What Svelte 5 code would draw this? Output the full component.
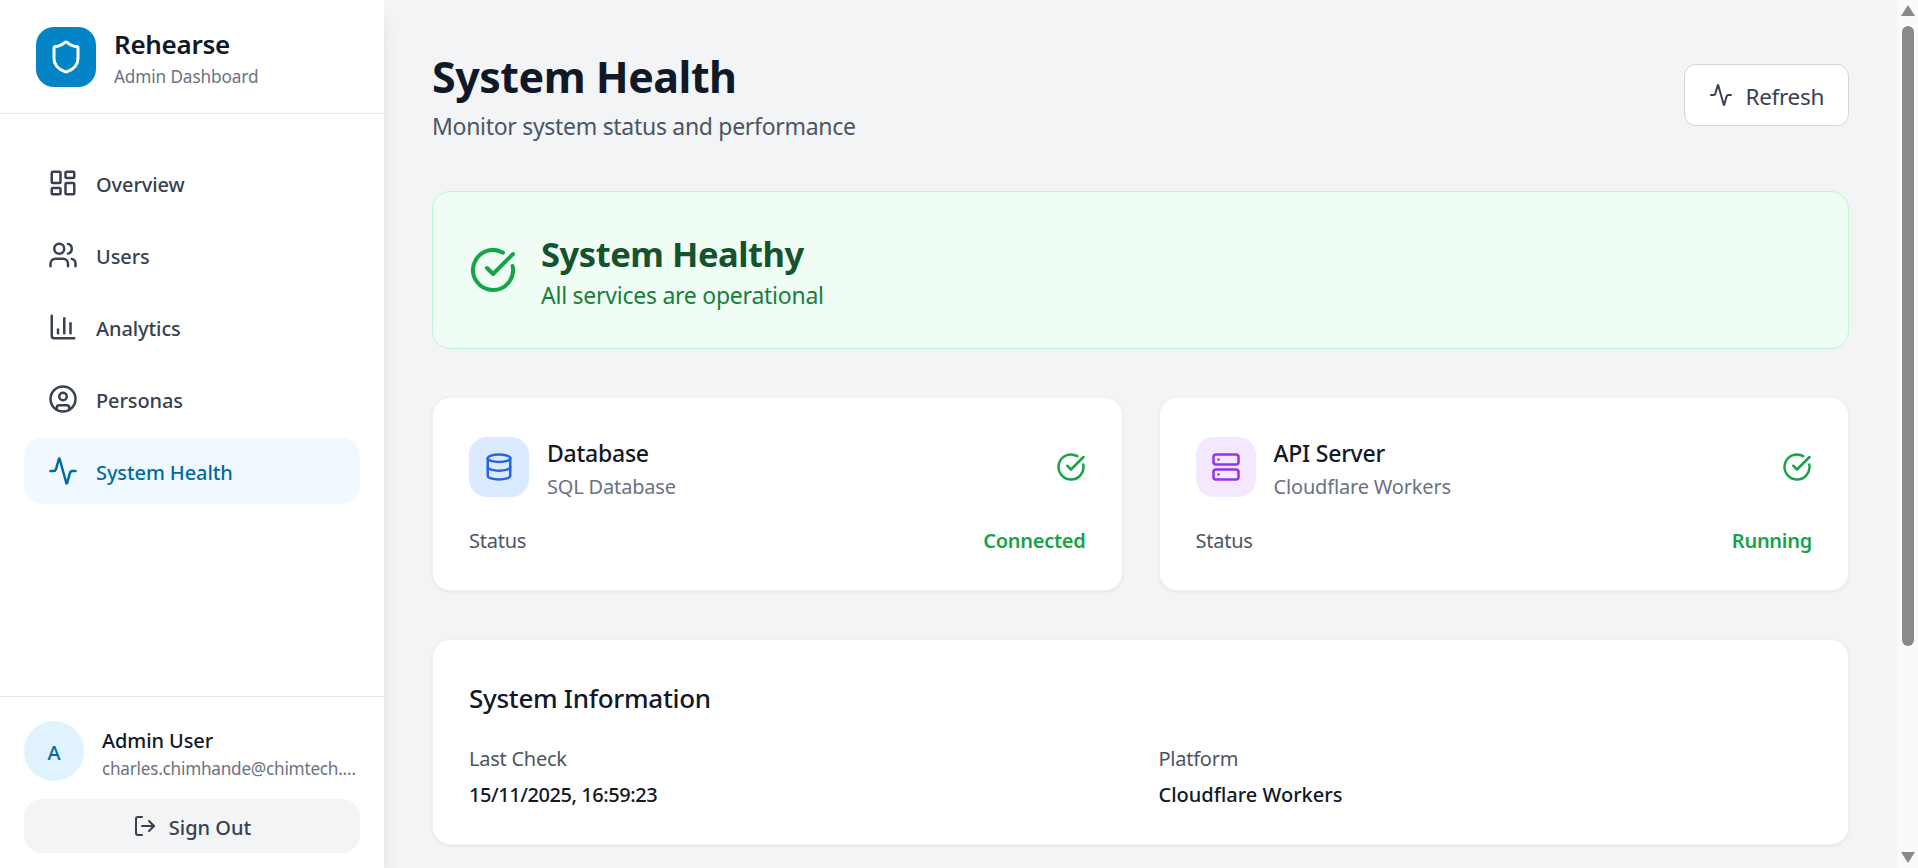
<script>
  const nav = [
    { label: 'Overview', icon: 'grid' },
    { label: 'Users', icon: 'users' },
    { label: 'Analytics', icon: 'chart' },
    { label: 'Personas', icon: 'persona' },
    { label: 'System Health', icon: 'activity', active: true }
  ];
  const services = [
    { name: 'Database', sub: 'SQL Database', tone: 'blue', icon: 'db', state: 'Connected' },
    { name: 'API Server', sub: 'Cloudflare Workers', tone: 'purple', icon: 'server', state: 'Running' }
  ];
  const activity = 'M22 12h-2.48a2 2 0 0 0-1.93 1.46l-2.35 8.36a.25.25 0 0 1-.48 0L9.24 2.18a.25.25 0 0 0-.48 0l-2.35 8.36A2 2 0 0 1 4.49 12H2';
</script>

{#snippet check(size)}
  <svg class="ic" width={size} height={size} viewBox="0 0 24 24"><path d="M21.801 10A10 10 0 1 1 17 3.335" /><path d="m9 11 3 3L22 4" /></svg>
{/snippet}

{#snippet navIcon(name)}
  <svg class="ic" width="30" height="30" viewBox="0 0 24 24">
    {#if name === 'grid'}
      <rect x="3" y="3" width="7" height="9" rx="1" /><rect x="14" y="3" width="7" height="5" rx="1" /><rect x="14" y="12" width="7" height="9" rx="1" /><rect x="3" y="16" width="7" height="5" rx="1" />
    {:else if name === 'users'}
      <path d="M16 21v-2a4 4 0 0 0-4-4H6a4 4 0 0 0-4 4v2" /><circle cx="9" cy="7" r="4" /><path d="M22 21v-2a4 4 0 0 0-3-3.87" /><path d="M16 3.13a4 4 0 0 1 0 7.75" />
    {:else if name === 'chart'}
      <path d="M3 3v16a2 2 0 0 0 2 2h16" /><path d="M18 17V9" /><path d="M13 17V5" /><path d="M8 17v-3" />
    {:else if name === 'persona'}
      <circle cx="12" cy="12" r="10" /><circle cx="12" cy="10" r="3" /><path d="M7 20.662V19a2 2 0 0 1 2-2h6a2 2 0 0 1 2 2v1.662" />
    {:else}
      <path d={activity} />
    {/if}
  </svg>
{/snippet}

<div class="app">
  <aside class="sidebar">
    <div class="brand">
      <div class="logo">
        <svg class="ic" width="36" height="36" viewBox="0 0 24 24"><path d="M20 13c0 5-3.5 7.5-7.66 8.95a1 1 0 0 1-.67-.01C7.5 20.5 4 18 4 13V6a1 1 0 0 1 1-1c2 0 4.5-1.2 6.24-2.72a1.17 1.17 0 0 1 1.52 0C14.51 3.81 17 5 19 5a1 1 0 0 1 1 1z" /></svg>
      </div>
      <div class="brand-text">
        <div class="brand-name">Rehearse</div>
        <div class="brand-sub">Admin Dashboard</div>
      </div>
    </div>
    <nav class="nav">
      {#each nav as item}
        <div class="nav-item" class:active={item.active}>
          {@render navIcon(item.icon)}
          <span>{item.label}</span>
        </div>
      {/each}
    </nav>
    <div class="foot">
      <div class="user">
        <div class="avatar"><span>A</span></div>
        <div class="user-text">
          <div class="user-name">Admin User</div>
          <div class="user-mail">charles.chimhande@chimtech.co.zw</div>
        </div>
      </div>
      <div class="signout">
        <svg class="ic" width="24" height="24" viewBox="0 0 24 24"><path d="M9 21H5a2 2 0 0 1-2-2V5a2 2 0 0 1 2-2h4" /><polyline points="16 17 21 12 16 7" /><line x1="21" y1="12" x2="9" y2="12" /></svg>
        <span>Sign Out</span>
      </div>
    </div>
  </aside>

  <main class="main">
    <header class="head">
      <div>
        <h1>System Health</h1>
        <p class="lead">Monitor system status and performance</p>
      </div>
      <div class="refresh">
        <svg class="ic" width="24" height="24" viewBox="0 0 24 24"><path d={activity} /></svg>
        <span>Refresh</span>
      </div>
    </header>

    <section class="banner">
      <span class="banner-icon">{@render check(48)}</span>
      <div>
        <div class="banner-title">System Healthy</div>
        <div class="banner-sub">All services are operational</div>
      </div>
    </section>

    <section class="grid">
      {#each services as s}
        <div class="card">
          <div class="card-top">
            <div class="tile {s.tone}">
              <svg class="ic" width="30" height="30" viewBox="0 0 24 24">
                {#if s.icon === 'db'}
                  <ellipse cx="12" cy="5" rx="9" ry="3" /><path d="M3 5V19A9 3 0 0 0 21 19V5" /><path d="M3 12A9 3 0 0 0 21 12" />
                {:else}
                  <rect x="2" y="2" width="20" height="8" rx="2" /><rect x="2" y="14" width="20" height="8" rx="2" /><line x1="6" y1="6" x2="6.01" y2="6" /><line x1="6" y1="18" x2="6.01" y2="18" />
                {/if}
              </svg>
            </div>
            <div class="card-text">
              <div class="card-name">{s.name}</div>
              <div class="card-sub">{s.sub}</div>
            </div>
            <span class="ok">{@render check(30)}</span>
          </div>
          <div class="card-row">
            <span class="row-label">Status</span>
            <span class="row-state">{s.state}</span>
          </div>
        </div>
      {/each}
    </section>

    <section class="card info">
      <h2>System Information</h2>
      <div class="info-grid">
        <div>
          <div class="row-label">Last Check</div>
          <div class="info-val num">15/11/2025, 16:59:23</div>
        </div>
        <div>
          <div class="row-label">Platform</div>
          <div class="info-val">Cloudflare Workers</div>
        </div>
      </div>
    </section>
  </main>

  <div class="scrollbar">
    <span class="arrow up"></span>
    <span class="thumb-track"><span class="thumb"></span></span>
    <span class="arrow down"></span>
  </div>
</div>

<style>
  :global(body) {
    margin: 0;
    background: #f3f4f6;
    font-family: "Noto Sans", "Open Sans", sans-serif;
    color: #111827;
    overflow: hidden;
  }
  .app {
    display: flex;
    height: 868px;
    overflow: hidden;
  }
  .ic {
    flex: none;
    fill: none;
    stroke: currentColor;
    stroke-width: 2;
    stroke-linecap: round;
    stroke-linejoin: round;
    display: block;
  }
  .sidebar {
    flex: none;
    width: 384px;
    box-sizing: border-box;
    background: #fff;
    display: flex;
    flex-direction: column;
    box-shadow: 0 15px 22px -4px rgba(0, 0, 0, 0.1), 0 6px 9px -6px rgba(0, 0, 0, 0.1);
    position: relative;
    z-index: 1;
  }
  .brand {
    height: 113px;
    border-bottom: 1px solid #e5e7eb;
    display: flex;
    align-items: center;
    gap: 18px;
    padding: 0 36px;
  }
  .logo {
    width: 60px;
    height: 60px;
    border-radius: 18px;
    background: #0284c7;
    color: #fff;
    display: flex;
    align-items: center;
    justify-content: center;
  }
  .brand-text {
    padding-top: 2px;
  }
  .brand-name {
    font-size: 26px;
    line-height: 36px;
    font-weight: 600;
    letter-spacing: -0.3px;
    color: #111827;
  }
  .brand-sub {
    margin-top: 3px;
    font-size: 17.2px;
    line-height: 24px;
    letter-spacing: -0.12px;
    color: #6b7280;
  }
  .nav {
    flex: 1;
    padding: 36px 24px;
    display: flex;
    flex-direction: column;
    gap: 6px;
  }
  .nav-item {
    height: 66px;
    border-radius: 18px;
    padding: 0 24px;
    display: flex;
    align-items: center;
    gap: 18px;
    font-size: 20px;
    font-weight: 500;
    letter-spacing: -0.1px;
    color: #374151;
  }
  .nav-item span {
    padding-top: 3px;
  }
  .nav-item.active {
    background: #f0f9ff;
    color: #0369a1;
  }
  .foot {
    border-top: 1px solid #e5e7eb;
    padding: 24px 24px 15px;
    display: flex;
    flex-direction: column;
    gap: 18px;
  }
  .user {
    display: flex;
    align-items: center;
    gap: 18px;
  }
  .avatar {
    flex: none;
    width: 60px;
    height: 60px;
    border-radius: 50%;
    background: #e0f2fe;
    color: #0369a1;
    font-size: 20px;
    font-weight: 500;
    display: flex;
    align-items: center;
    justify-content: center;
  }
  .avatar span {
    padding-top: 3px;
  }
  .user-text {
    min-width: 0;
    flex: 1;
  }
  .user-name {
    padding-top: 4px;
    font-size: 20px;
    line-height: 26px;
    font-weight: 500;
    letter-spacing: -0.1px;
    color: #111827;
  }
  .user-mail {
    padding-top: 5px;
    font-size: 17.2px;
    line-height: 19px;
    letter-spacing: -0.25px;
    color: #6b7280;
    white-space: nowrap;
    overflow: hidden;
    text-overflow: ellipsis;
  }
  .signout {
    height: 54px;
    border-radius: 18px;
    background: #f3f4f6;
    color: #374151;
    display: flex;
    align-items: center;
    justify-content: center;
    gap: 12px;
    font-size: 20px;
    font-weight: 500;
  }
  .signout span {
    padding-top: 3px;
  }
  .main {
    flex: 1;
    min-width: 0;
    padding: 47px 48px 0;
    overflow: hidden;
  }
  .head {
    display: flex;
    justify-content: space-between;
    align-items: center;
    margin-bottom: 48px;
  }
  h1 {
    margin: 0;
    padding-top: 6px;
    font-size: 43px;
    line-height: 48px;
    font-weight: 700;
    letter-spacing: -0.5px;
    color: #111827;
  }
  .lead {
    margin: 6px 0 0;
    padding-top: 3px;
    font-size: 23px;
    line-height: 33px;
    letter-spacing: -0.3px;
    color: #4b5563;
  }
  .refresh {
    display: flex;
    align-items: center;
    gap: 12px;
    height: 62px;
    box-sizing: border-box;
    padding: 0 24px;
    background: #fff;
    border: 1px solid #d1d5db;
    border-radius: 12px;
    font-size: 22.5px;
    letter-spacing: -0.3px;
    color: #374151;
  }
  .refresh span {
    padding-top: 3px;
  }
  .banner {
    display: flex;
    align-items: center;
    gap: 24px;
    padding: 36px;
    background: #f0fdf4;
    border: 1px solid #bbf7d0;
    border-radius: 18px;
    margin-bottom: 48px;
  }
  .banner-icon {
    color: #16a34a;
  }
  .banner-title {
    padding-top: 4px;
    font-size: 34.5px;
    line-height: 44px;
    font-weight: 700;
    letter-spacing: -0.46px;
    color: #14532d;
  }
  .banner-sub {
    padding-top: 3px;
    font-size: 23px;
    line-height: 33px;
    letter-spacing: -0.25px;
    color: #15803d;
  }
  .grid {
    display: grid;
    grid-template-columns: 1fr 1fr;
    gap: 36px;
    margin-bottom: 48px;
  }
  .card {
    background: #fff;
    border: 1px solid #eff0f2;
    border-radius: 18px;
    padding: 36px;
    box-shadow: 0 1px 3px rgba(0, 0, 0, 0.07);
  }
  .card-top {
    display: flex;
    align-items: center;
    gap: 18px;
  }
  .tile {
    flex: none;
    width: 60px;
    height: 60px;
    border-radius: 18px;
    display: flex;
    align-items: center;
    justify-content: center;
  }
  .tile.blue {
    background: #dbeafe;
    color: #2563eb;
  }
  .tile.purple {
    background: #f3e8ff;
    color: #9333ea;
  }
  .card-text {
    flex: 1;
  }
  .card-name {
    padding-top: 3px;
    font-size: 23px;
    line-height: 33px;
    font-weight: 500;
    letter-spacing: -0.24px;
    color: #111827;
  }
  .card-sub {
    padding-top: 4px;
    font-size: 20px;
    line-height: 26px;
    letter-spacing: -0.17px;
    color: #6b7280;
  }
  .ok {
    color: #16a34a;
  }
  .card-row {
    margin-top: 24px;
    display: flex;
    justify-content: space-between;
    font-size: 20px;
  }
  .row-label {
    padding-top: 3px;
    font-size: 20px;
    line-height: 27px;
    letter-spacing: -0.25px;
    color: #4b5563;
  }
  .row-state {
    padding-top: 3px;
    line-height: 27px;
    font-weight: 600;
    letter-spacing: -0.27px;
    color: #16a34a;
  }
  h2 {
    margin: 0 0 24px;
    padding-top: 3px;
    font-size: 26px;
    line-height: 39px;
    font-weight: 500;
    letter-spacing: -0.3px;
    color: #111827;
  }
  .info-grid {
    display: grid;
    grid-template-columns: 1fr 1fr;
    gap: 36px;
  }
  .info-val {
    margin-top: 6px;
    padding-top: 4px;
    font-size: 20px;
    line-height: 26px;
    font-weight: 500;
    color: #111827;
  }
  .info-val.num {
    letter-spacing: -0.44px;
  }
  .scrollbar {
    flex: none;
    width: 21px;
    background: #fafafa;
    display: flex;
    flex-direction: column;
    align-items: center;
    position: relative;
    z-index: 2;
  }
  .arrow {
    flex: none;
    width: 0;
    height: 0;
    border-left: 7px solid transparent;
    border-right: 7px solid transparent;
  }
  .arrow.up {
    margin-top: 5px;
    border-bottom: 11px solid #8a8a8a;
  }
  .arrow.down {
    margin-bottom: 5px;
    border-top: 11px solid #8a8a8a;
  }
  .thumb-track {
    flex: 1;
    width: 100%;
    display: flex;
    justify-content: center;
    padding-top: 10px;
  }
  .thumb {
    width: 12px;
    height: 620px;
    border-radius: 6px;
    background: #8a8a8a;
  }
</style>
